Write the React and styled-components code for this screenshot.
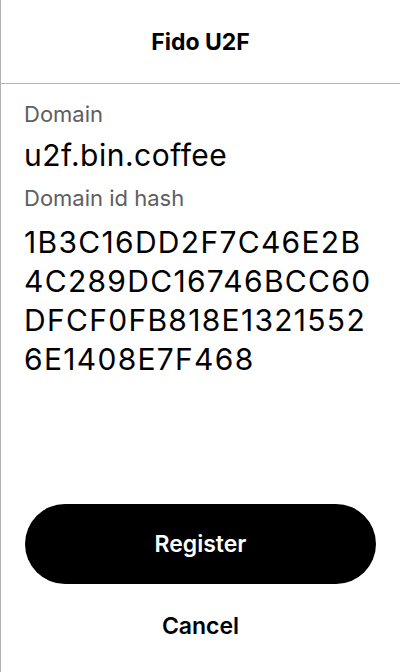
import React from 'react'
import styled, { createGlobalStyle } from 'styled-components'

const GlobalStyle = createGlobalStyle`
  html, body {
    margin: 0;
    padding: 0;
    background: #ffffff;
  }
  body {
    font-family: Inter, "Noto Sans", "Liberation Sans", sans-serif;
    color: #000000;
  }
`

const Screen = styled.div`
  height: 672px;
  display: flex;
  flex-direction: column;
  border-left: 1px solid #b3b3b3;
  box-sizing: border-box;
`

const Header = styled.header`
  height: 83px;
  display: flex;
  align-items: center;
  justify-content: center;
  border-bottom: 1px solid #b3b3b3;
  flex-shrink: 0;
`

const Title = styled.h1`
  margin: 0;
  font-size: 23px;
  font-weight: 700;
`

const Content = styled.main`
  flex: 1;
  display: flex;
  flex-direction: column;
  padding: 15px 23px 0 23px;
`

const Label = styled.div`
  font-size: 22px;
  line-height: 30px;
  color: #5e5e5e;
`

const Value = styled.div`
  font-size: 30px;
  line-height: ${(p) => (p.$multi ? '39px' : '40px')};
  margin: ${(p) => (p.$multi ? '10px 0 0' : '6px 0 8px')};
  letter-spacing: ${(p) => (p.$multi ? '1.3px' : '0.5px')};
  max-width: 350px;
  word-break: break-all;
`

const Actions = styled.div`
  display: flex;
  flex-direction: column;
  padding: 0 24px 14px 24px;
`

const PrimaryButton = styled.button`
  height: 80px;
  border: 0;
  border-radius: 40px;
  background: #000000;
  color: #ffffff;
  font-family: inherit;
  font-size: 23px;
  font-weight: 600;
  cursor: pointer;
`

const TextButton = styled.button`
  height: 64px;
  margin-top: 10px;
  border: 0;
  background: transparent;
  color: #000000;
  font-family: inherit;
  font-size: 23px;
  font-weight: 600;
  cursor: pointer;
`

const App = () => {
  const domain = 'u2f.bin.coffee'
  const hash = '1B3C16DD2F7C46E2B4C289DC16746BCC60DFCF0FB818E13215526E1408E7F468'

  return (
    <>
      <GlobalStyle />
      <Screen>
        <Header>
          <Title>Fido U2F</Title>
        </Header>
        <Content>
          <Label>Domain</Label>
          <Value>{domain}</Value>
          <Label>Domain id hash</Label>
          <Value $multi>{hash}</Value>
        </Content>
        <Actions>
          <PrimaryButton>Register</PrimaryButton>
          <TextButton>Cancel</TextButton>
        </Actions>
      </Screen>
    </>
  )
}

export default App
